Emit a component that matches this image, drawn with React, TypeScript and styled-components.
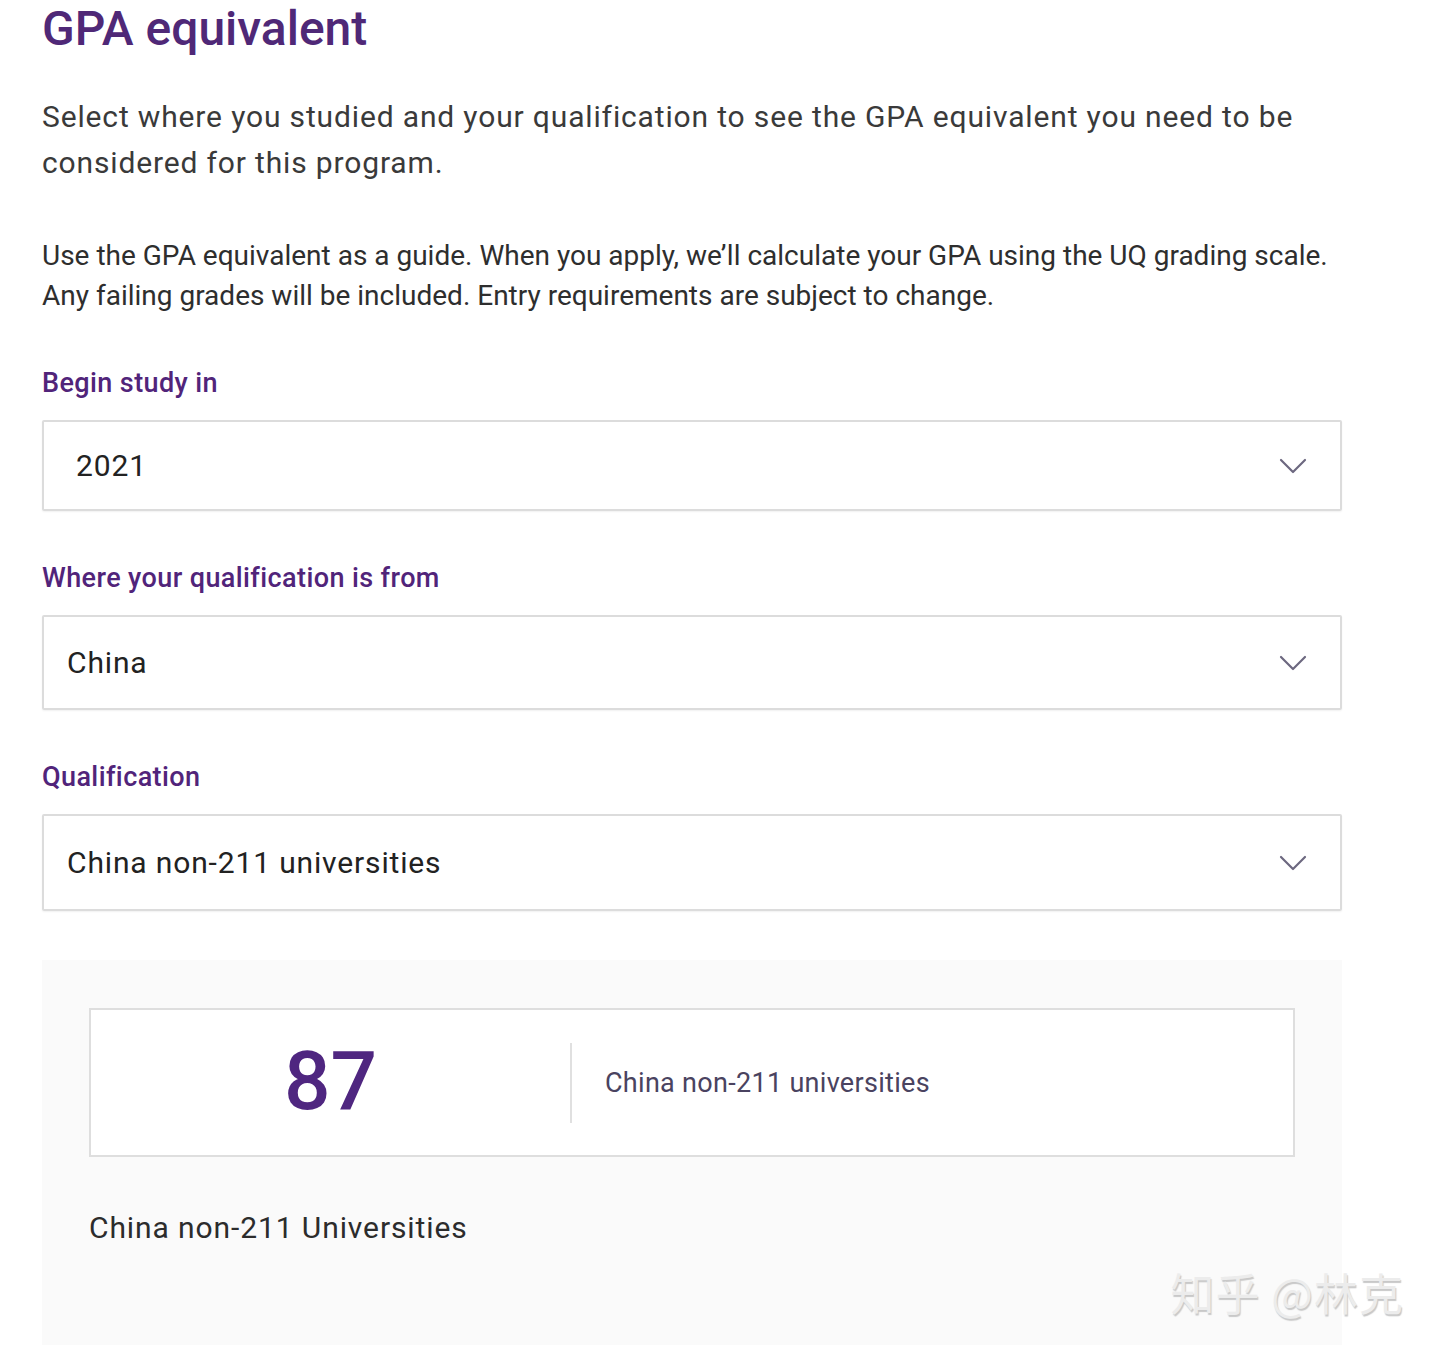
import React from 'react'
import styled, { createGlobalStyle } from 'styled-components'

const GlobalStyle = createGlobalStyle`
  body {
    margin: 0;
    background: #fff;
    font-family: Roboto, "Noto Sans", Arial, sans-serif;
  }
`

const fields = [
  { label: 'Begin study in', value: '2021', indent: 32, height: 91 },
  { label: 'Where your qualification is from', value: 'China', indent: 23, height: 95 },
  { label: 'Qualification', value: 'China non-211 universities', indent: 23, height: 97 }
]

const Chevron = () => (
  <svg width="28" height="16" viewBox="0 0 28 16" fill="none">
    <path d="M2 2l12 12L26 2" stroke="#6d6880" strokeWidth="2.2" strokeLinecap="round" strokeLinejoin="round" />
  </svg>
)

export default function App() {
  return (
    <Page>
      <GlobalStyle />
      <Title>GPA equivalent</Title>
      <Intro>
        Select where you studied and your qualification to see the GPA equivalent you need to be considered for this
        program.
      </Intro>
      <Note>
        Use the GPA equivalent as a guide. When you apply, we’ll calculate your GPA using the UQ grading scale.
        <br />
        Any failing grades will be included. Entry requirements are subject to change.
      </Note>
      <Fields>
        {fields.map(f => (
          <Field key={f.label}>
            <Label>{f.label}</Label>
            <Select $indent={f.indent} $height={f.height}>
              <span>{f.value}</span>
              <Chevron />
            </Select>
          </Field>
        ))}
      </Fields>
      <ResultPanel>
        <ResultCard>
          <Score>87</Score>
          <Divider />
          <ScoreLabel>China non-211 universities</ScoreLabel>
        </ResultCard>
        <ResultName>China non-211 Universities</ResultName>
        <Watermark>知乎 @林克</Watermark>
      </ResultPanel>
    </Page>
  )
}

const Page = styled.div`
  width: 1300px;
  padding: 0 0 10px 42px;
`

const Title = styled.h1`
  margin: 0;
  padding-top: 2px;
  font-size: 48px;
  line-height: 54px;
  font-weight: 500;
  color: #4f2877;
`

const Intro = styled.p`
  margin: 38px 0 0;
  font-size: 30px;
  line-height: 46px;
  color: #3a3a3a;
  max-width: 1300px;
  letter-spacing: 0.85px;
`

const Note = styled.p`
  margin: 50px 0 0;
  font-size: 28px;
  line-height: 40px;
  color: #2e2e2e;
  letter-spacing: 0;
  white-space: nowrap;
`

const Fields = styled.div`
  margin-top: 49px;
  display: flex;
  flex-direction: column;
  gap: 49px;
`

const Field = styled.div`
  display: flex;
  flex-direction: column;
  gap: 19px;
`

const Label = styled.div`
  font-size: 27px;
  line-height: 36px;
  font-weight: 500;
  color: #51247a;
  letter-spacing: 0.4px;
`

const Select = styled.div<{ $indent: number; $height: number }>`
  box-sizing: border-box;
  height: ${p => p.$height}px;
  border: 2px solid #dcdcdc;
  border-radius: 2px;
  box-shadow: 0 1px 2px rgba(0, 0, 0, 0.06);
  display: flex;
  align-items: center;
  justify-content: space-between;
  padding: 0 33px 0 ${p => p.$indent}px;
  font-size: 30px;
  color: #222;
  letter-spacing: 0.85px;
`

const ResultPanel = styled.div`
  position: relative;
  margin-top: 49px;
  background: #fafafa;
  padding: 48px 47px 96px;
  height: 385px;
  box-sizing: border-box;
`

const ResultCard = styled.div`
  height: 149px;
  box-sizing: border-box;
  background: #fff;
  border: 2px solid #dedede;
  display: grid;
  grid-template-columns: 479px 2px 1fr;
  align-items: center;
`

const Score = styled.div`
  text-align: center;
  font-size: 82px;
  font-weight: 500;
  color: #4f2680;
  line-height: 1;
  padding-bottom: 4px;
`

const Divider = styled.div`
  height: 80px;
  background: #e0e0e0;
`

const ScoreLabel = styled.div`
  padding-left: 33px;
  font-size: 27px;
  color: #4a4360;
  letter-spacing: 0.3px;
`

const ResultName = styled.div`
  margin-top: 53px;
  font-size: 30px;
  color: #2c2c2c;
  letter-spacing: 0.9px;
`

const Watermark = styled.div`
  position: absolute;
  right: -62px;
  top: 310px;
  font-family: "Noto Sans CJK SC", sans-serif;
  font-size: 44px;
  line-height: 1;
  color: #ececec;
  text-shadow: 1px 2px 1px #c8c8c8;
  letter-spacing: 1px;
`
